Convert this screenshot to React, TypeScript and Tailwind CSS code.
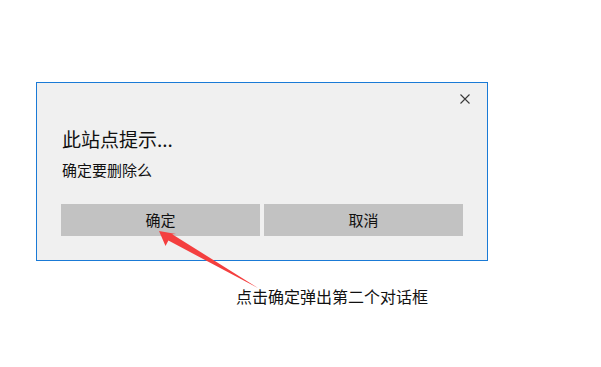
import React from "react";

const CloseIcon = () => (
    <svg width="10" height="10" viewBox="0 0 10 10" className="block">
        <path d="M0.5 0.5 L9.5 9.5 M9.5 0.5 L0.5 9.5" stroke="#3a3a3a" strokeWidth="1.1" />
    </svg>
);

const Arrow = () => (
    <svg
        width="601"
        height="367"
        viewBox="0 0 601 367"
        className="absolute left-0 top-0 pointer-events-none"
    >
        <polygon
            points="159,231 165.5,246 168.4,240.6 258,288 172.2,234.2 176,234"
            fill="#f43f3f"
        />
    </svg>
);

const App = () => {
    return (
        <div className="relative w-[601px] h-[367px] bg-white font-['Noto_Sans_CJK_SC','Noto_Sans',sans-serif] text-black">
            <div className="pt-[82px] pl-[36px]">
                <div className="w-[452px] h-[179px] border border-[#1a7ad6] bg-[#f0f0f0] flex flex-col">
                    <div className="flex justify-end pt-[11px] pr-[17px]">
                        <CloseIcon />
                    </div>
                    <div className="pl-[25px] mt-[25px] text-[19px] leading-[19px] text-[#111]">
                        此站点提示...
                    </div>
                    <div className="pl-[25px] mt-[14px] text-[15px] leading-[15px] text-[#111]">
                        确定要删除么
                    </div>
                    <div className="flex gap-[4px] pl-[24px] pr-[24px] mt-[27px]">
                        <button className="flex-1 h-[32px] bg-[#c2c2c2] text-[15px] text-[#111]">
                            确定
                        </button>
                        <button className="flex-1 h-[32px] bg-[#c2c2c2] text-[15px] text-[#111]">
                            取消
                        </button>
                    </div>
                </div>
            </div>
            <div className="pl-[236px] mt-[27px] text-[16px] leading-[16px] text-[#111]">
                点击确定弹出第二个对话框
            </div>
            <Arrow />
        </div>
    );
};

export default App;
